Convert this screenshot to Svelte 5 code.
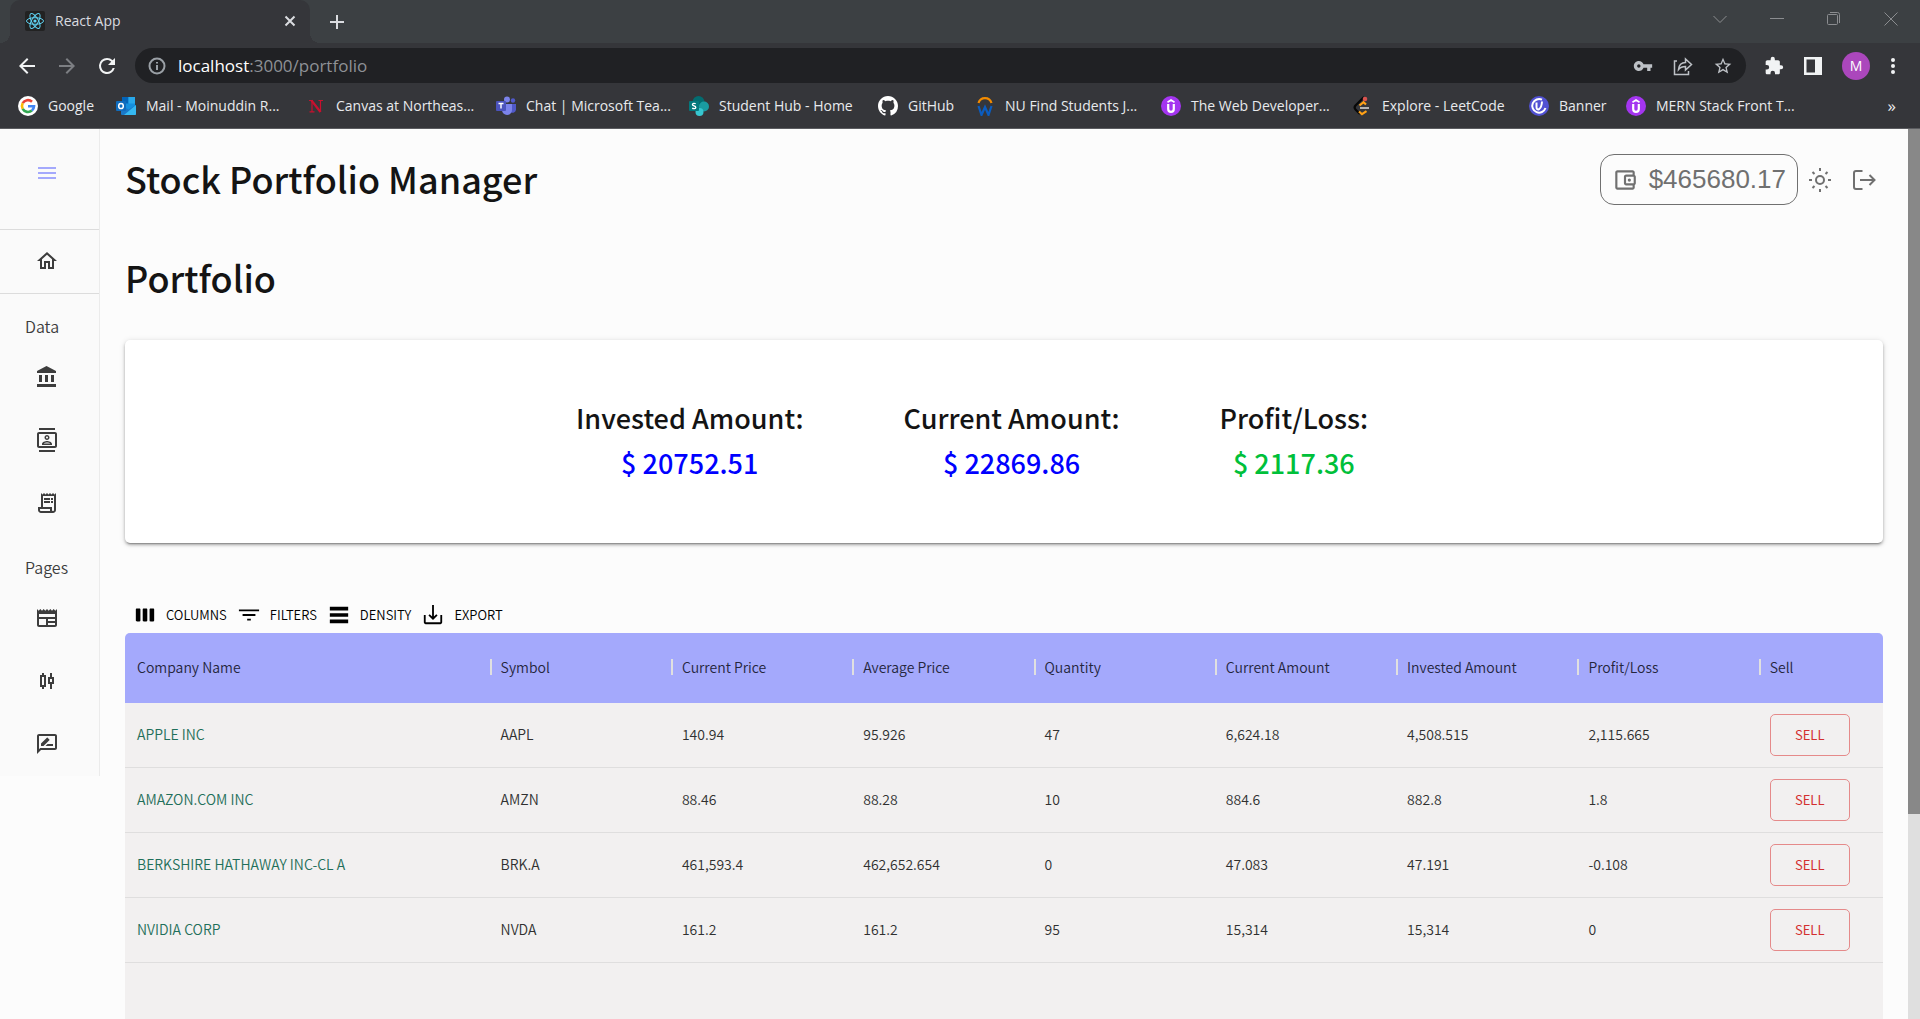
<script>
  const icons = {
    menu: 'M3 18h18v-2H3v2zm0-5h18v-2H3v2zm0-7v2h18V6H3z',
    home: 'M12 5.69l5 4.5V18h-2v-6H9v6H7v-7.81l5-4.5M12 3L2 12h3v8h6v-6h2v6h6v-8h3L12 3z',
    bank: 'M4 10v7h3v-7H4zm6 0v7h3v-7h-3zM2 22h19v-3H2v3zm14-12v7h3v-7h-3zm-4.5-9L2 6v2h19V6l-9.5-5z',
    contacts: 'M20 4H4c-1.1 0-2 .9-2 2v12c0 1.1.9 2 2 2h16c1.1 0 2-.9 2-2V6c0-1.1-.9-2-2-2zm0 14H4V6h16v12zM4 0h16v2H4zm0 22h16v2H4zm8-10c1.38 0 2.5-1.12 2.5-2.5S13.38 7 12 7 9.5 8.12 9.5 9.5 10.62 12 12 12zm0-3.5c.55 0 1 .45 1 1s-.45 1-1 1-1-.45-1-1 .45-1 1-1zm5 7.49C17 13.9 13.69 13 12 13s-5 .9-5 2.99V17h10v-1.01zm-8.19-.49c.61-.52 2.03-1 3.19-1 1.17 0 2.59.48 3.2 1H8.81z',
    receipt: 'M19.5 3.5L18 2l-1.5 1.5L15 2l-1.5 1.5L12 2l-1.5 1.5L9 2 7.5 3.5 6 2v14H3v3c0 1.66 1.34 3 3 3h12c1.66 0 3-1.34 3-3V2l-1.5 1.5zM15 20H6c-.55 0-1-.45-1-1v-1h10v2zm4-1c0 .55-.45 1-1 1s-1-.45-1-1v-3H8V5h11v14zM9 7h6v2H9zM16 7h2v2h-2zM9 10h6v2H9zM16 10h2v2h-2z',
    news: 'M22 3l-1.67 1.67L18.67 3 17 4.67 15.33 3l-1.66 1.67L12 3l-1.67 1.67L8.67 3 7 4.67 5.33 3 3.67 4.67 2 3v16c0 1.1.9 2 2 2h16c1.1 0 2-.9 2-2V3zM11 19H4v-6h7v6zm9 0h-7v-2h7v2zm0-4h-7v-2h7v2zm0-4H4V8h16v3z',
    candles: 'M9 4H7v2H5v12h2v2h2v-2h2V6H9V4zm0 12H7V8h2v8zM19 8h-2V4h-2v4h-2v7h2v5h2v-5h2V8zm-2 5h-2v-3h2v3z',
    review: 'M20 2H4c-1.1 0-2 .9-2 2v18l4-4h14c1.1 0 2-.9 2-2V4c0-1.1-.9-2-2-2zm0 14H5.17L4 17.17V4h16v12zM10.5 14H18v-2h-5.5zM14.36 8.13c.2-.2.2-.51 0-.71l-1.77-1.77c-.2-.2-.51-.2-.71 0L6 11.53V14h2.47l5.89-5.87z',
    wallet: 'M21 7.28V5c0-1.1-.9-2-2-2H5c-1.11 0-2 .9-2 2v14c0 1.1.89 2 2 2h14c1.1 0 2-.9 2-2v-2.28c.59-.35 1-.98 1-1.72V9c0-.74-.41-1.37-1-1.72zM20 9v6h-7V9h7zM5 19V5h14v2h-6c-1.1 0-2 .9-2 2v6c0 1.1.9 2 2 2h6v2H5zM16 10.5a1.5 1.5 0 1 0 0 3a1.5 1.5 0 1 0 0-3z',
    columns: 'M6 5H3c-.55 0-1 .45-1 1v12c0 .55.45 1 1 1h3c.55 0 1-.45 1-1V6c0-.55-.45-1-1-1zM13.5 5h-3c-.55 0-1 .45-1 1v12c0 .55.45 1 1 1h3c.55 0 1-.45 1-1V6c0-.55-.45-1-1-1zM21 5h-3c-.55 0-1 .45-1 1v12c0 .55.45 1 1 1h3c.55 0 1-.45 1-1V6c0-.55-.45-1-1-1z',
    filters: 'M10 18h4v-2h-4v2zM1 6v2h22V6H1zm4 7h14v-2H5v2z',
    density: 'M22 7H2V3h20v4zM22 10H2v4h20v-4zM22 17H2v4h20v-4z',
    exportIcon: 'M20 12v8H4v-8H2v8c0 1.1.9 2 2 2h16c1.1 0 2-.9 2-2v-8h-2zm-7 1.67l2.590-2.580L17 12.500l-5 5-5-5 1.410-1.410L11 13.670V1h2z',
    key: 'M12.65 10C11.83 7.67 9.61 6 7 6c-3.31 0-6 2.69-6 6s2.69 6 6 6c2.61 0 4.83-1.67 5.65-4H17v4h4v-4h2v-4H12.65zM7 14c-1.1 0-2-.9-2-2s.9-2 2-2 2 .9 2 2-.9 2-2 2z',
    star: 'M22 9.24l-7.19-.62L12 2 9.19 8.63 2 9.24l5.46 4.73L5.82 21 12 17.27 18.18 21l-1.63-7.03L22 9.24zM12 15.4l-3.76 2.27 1-4.28-3.32-2.88 4.38-.38L12 6.1l1.71 4.04 4.38.38-3.32 2.88 1 4.28L12 15.4z',
    puzzle: 'M20.5 11H19V7c0-1.1-.9-2-2-2h-4V3.500a2.500 2.500 0 0 0-5 0V5H4c-1.100 0-2 .9-2 2v3.800h1.500a2.700 2.700 0 0 1 0 5.400H2V20c0 1.100.9 2 2 2h3.800v-1.500a2.700 2.700 0 0 1 5.400 0V22H17c1.100 0 2-.9 2-2v-4h1.500a2.500 2.500 0 0 0 0-5z',
    back: 'M20 11H7.830l5.590-5.590L12 4l-8 8 8 8 1.410-1.410L7.830 13H20v-2z',
    forward: 'M12 4l-1.410 1.410L16.170 11H4v2h12.170l-5.580 5.590L12 20l8-8z',
    reload: 'M17.650 6.350A7.958 7.958 0 0 0 12 4a8 8 0 1 0 7.730 10h-2.080A6 6 0 1 1 12 6c1.660 0 3.140.69 4.220 1.780L13 11h7V4l-2.350 2.350z'
  };

  const bookmarks = [
    { icon: 'google', label: 'Google' },
    { icon: 'outlook', label: 'Mail - Moinuddin R...' },
    { icon: 'canvas', label: 'Canvas at Northeas...' },
    { icon: 'teams', label: 'Chat | Microsoft Tea...' },
    { icon: 'sharepoint', label: 'Student Hub - Home' },
    { icon: 'github', label: 'GitHub' },
    { icon: 'workday', label: 'NU Find Students J...' },
    { icon: 'udemy', label: 'The Web Developer...' },
    { icon: 'leetcode', label: 'Explore - LeetCode' },
    { icon: 'banner', label: 'Banner' },
    { icon: 'udemy', label: 'MERN Stack Front T...' }
  ];

  const dataLinks = [
    { icon: 'bank', label: 'Accounts' },
    { icon: 'contacts', label: 'Contacts' },
    { icon: 'receipt', label: 'Orders' }
  ];
  const pageLinks = [
    { icon: 'news', label: 'News' },
    { icon: 'candles', label: 'Stocks' },
    { icon: 'review', label: 'Reviews' }
  ];

  const totals = [
    { label: 'Invested Amount:', value: '$ 20752.51', gain: false },
    { label: 'Current Amount:', value: '$ 22869.86', gain: false },
    { label: 'Profit/Loss:', value: '$ 2117.36', gain: true }
  ];

  const tools = [
    { icon: 'columns', label: 'COLUMNS' },
    { icon: 'filters', label: 'FILTERS' },
    { icon: 'density', label: 'DENSITY' },
    { icon: 'exportIcon', label: 'EXPORT' }
  ];

  const headings = ['Company Name', 'Symbol', 'Current Price', 'Average Price', 'Quantity', 'Current Amount', 'Invested Amount', 'Profit/Loss', 'Sell'];
  const rows = [
    ['APPLE INC', 'AAPL', '140.94', '95.926', '47', '6,624.18', '4,508.515', '2,115.665'],
    ['AMAZON.COM INC', 'AMZN', '88.46', '88.28', '10', '884.6', '882.8', '1.8'],
    ['BERKSHIRE HATHAWAY INC-CL A', 'BRK.A', '461,593.4', '462,652.654', '0', '47.083', '47.191', '-0.108'],
    ['NVIDIA CORP', 'NVDA', '161.2', '161.2', '95', '15,314', '15,314', '0']
  ];
</script>

{#snippet icon(name, cls)}
  <svg class="icon {cls}" viewBox="0 0 24 24" aria-hidden="true"><path fill-rule="evenodd" d={icons[name]} /></svg>
{/snippet}

{#snippet favicon(name)}
  <svg class="favicon" viewBox="0 0 20 20" aria-hidden="true">
    {#if name === 'google'}
      <circle cx="10" cy="10" r="10" fill="#fff" />
      <g fill="none" stroke-width="2.600">
        <path d="M14 5.700A6 6 0 0 0 4.700 7.200" stroke="#ea4335" />
        <path d="M4.700 7.200a6 6 0 0 0 0 5.600" stroke="#fbbc05" />
        <path d="M4.700 12.800a6 6 0 0 0 9.200 1.700" stroke="#34a853" />
        <path d="M13.900 14.500A6 6 0 0 0 16 10.300H10" stroke="#4285f4" />
      </g>
    {:else if name === 'outlook'}
      <rect x="6" y="1" width="13" height="13" rx="1" fill="#1490df" />
      <path d="M6 1h6.500v6.500H6z" fill="#0364b8" />
      <path d="M12.500 1H19v6.500h-6.500z" fill="#28a8ea" />
      <path d="M5 9l7.500 4.500L20 9v9a1 1 0 0 1-1 1H6a1 1 0 0 1-1-1z" fill="#1a78c8" />
      <path d="M20 9v9a1 1 0 0 1-1 1H8z" fill="#35b8f1" />
      <rect x="0" y="5" width="10" height="10" rx="1" fill="#0f6cbd" />
      <ellipse cx="5" cy="10" rx="2.300" ry="2.600" fill="none" stroke="#fff" stroke-width="1.500" />
    {:else if name === 'canvas'}
      <g fill="none" stroke="#c8102e"><path d="M6 16V4.500M14.500 4v12" stroke-width="1.200" /><path d="M5.500 4.500l9 11.500" stroke-width="2.200" /><path d="M3 4.500h4M12.500 4.500h4.500M3.500 15.800h5" stroke-width="1.200" /></g>
    {:else if name === 'teams'}
      <circle cx="11" cy="3.500" r="3" fill="#7b83eb" />
      <circle cx="17" cy="4.500" r="2.200" fill="#5059c9" />
      <path d="M14 8h6v5.500a3.500 3.500 0 0 1-5 3z" fill="#5059c9" />
      <path d="M6 8h10v6a5 5 0 0 1-10 0z" fill="#7b83eb" />
      <rect x="0" y="5" width="10" height="10" rx="1" fill="#4b53bc" />
      <path d="M2.500 7.500h5M5 7.500v5" stroke="#fff" stroke-width="1.400" />
    {:else if name === 'sharepoint'}
      <circle cx="9.500" cy="6" r="6" fill="#036c70" />
      <circle cx="15" cy="10.500" r="5" fill="#1a9ba1" />
      <circle cx="10.500" cy="16" r="4" fill="#37c6d0" />
      <rect x="0" y="5" width="10" height="10" rx="1" fill="#03787c" />
      <path d="M6.700 7.800C5.500 7 3.400 7.200 3.400 8.600c0 1.700 3.400 1 3.400 2.800 0 1.400-2.200 1.600-3.600.7" fill="none" stroke="#fff" stroke-width="1.300" />
    {:else if name === 'github'}
      <path transform="scale(1.25)" fill="#fff" d="M8 0C3.580 0 0 3.580 0 8c0 3.540 2.290 6.530 5.470 7.590.4.070.55-.17.55-.38 0-.19-.01-.82-.01-1.490-2.010.37-2.530-.49-2.690-.94-.09-.23-.48-.94-.82-1.130-.28-.15-.68-.52-.01-.53.63-.01 1.080.58 1.230.82.72 1.210 1.870.87 2.330.66.070-.52.28-.87.51-1.070-1.780-.2-3.640-.89-3.640-3.950 0-.87.31-1.590.82-2.150-.08-.2-.36-1.020.080-2.120 0 0 .67-.21 2.200.82.64-.18 1.320-.27 2-.27s1.360.09 2 .27c1.530-1.040 2.200-.82 2.200-.82.44 1.100.16 1.920.080 2.120.51.56.82 1.270.82 2.150 0 3.070-1.870 3.750-3.650 3.950.29.25.54.73.54 1.480 0 1.070-.01 1.930-.01 2.200 0 .21.15.46.55.38A8.010 8.010 0 0 0 16 8c0-4.420-3.580-8-8-8z" />
    {:else if name === 'workday'}
      <path d="M3.500 7a6.800 6.800 0 0 1 13 0" fill="none" stroke="#f38b00" stroke-width="2.200" />
      <path d="M3.500 10l3 9 3.500-8 3.500 8 3-9" fill="none" stroke="#0b5cbf" stroke-width="2.200" />
    {:else if name === 'udemy'}
      <circle cx="10" cy="10" r="10" fill="#a435f0" />
      <path d="M6.500 6.200L10 4l3.500 2.200" fill="none" stroke="#fff" stroke-width="1.600" />
      <path d="M7.200 8v5a2.800 2.800 0 0 0 5.600 0V8" fill="none" stroke="#fff" stroke-width="2.200" />
    {:else if name === 'leetcode'}
      <path d="M12 1L3.500 9.500a3 3 0 0 0 0 4L8 18" fill="none" stroke="#070707" stroke-width="2.200" />
      <circle cx="13" cy="3" r="2.300" fill="#d9534f" />
      <path d="M14 8.500L11.500 6.200 7.500 9.500M7 15.500l3 2.700 4.500-3" fill="none" stroke="#ffa116" stroke-width="2.200" />
      <path d="M8 12h9" stroke="#b3b3b3" stroke-width="2" />
    {:else if name === 'banner'}
      <circle cx="10" cy="10" r="10" fill="#5151d3" />
      <path d="M13 3.700A6.800 6.800 0 1 0 16.500 12M7.500 6.500v4.500c0 4.500 5 3 5.500-5.500" fill="none" stroke="#fff" stroke-width="2" />
    {/if}
  </svg>
{/snippet}

<div class="window">
  <header class="chrome">
    <div class="tabs">
      <div class="tab">
        <svg class="tab-icon" viewBox="0 0 20 20" aria-hidden="true">
          <rect width="20" height="20" rx="2" fill="#222" />
          <g fill="none" stroke="#5fd3f3">
            <ellipse cx="10" cy="10" rx="8.500" ry="3.300" />
            <ellipse cx="10" cy="10" rx="8.500" ry="3.300" transform="rotate(60 10 10)" />
            <ellipse cx="10" cy="10" rx="8.500" ry="3.300" transform="rotate(120 10 10)" />
          </g>
          <circle cx="10" cy="10" r="1.600" fill="#5fd3f3" />
        </svg>
        <span class="tab-title">React App</span>
        <button class="plain" aria-label="Close tab"><svg class="small" viewBox="0 0 12 12"><path d="M1.500 1.500l9 9M10.500 1.500l-9 9" /></svg></button>
      </div>
      <button class="plain new-tab" aria-label="New tab"><svg class="plus" viewBox="0 0 16 16"><path d="M8 1v14M1 8h14" /></svg></button>
      <div class="controls">
        <button class="plain" aria-label="Search tabs"><svg viewBox="0 0 14 14"><path d="M.5 4L7 10.500 13.500 4" /></svg></button>
        <button class="plain" aria-label="Minimize"><svg viewBox="0 0 14 14"><path d="M0 6.500h14" /></svg></button>
        <button class="plain" aria-label="Restore"><svg viewBox="0 0 14 14"><path d="M1.500 2.500h8a1 1 0 0 1 1 1v8a1 1 0 0 1-1 1h-8a1 1 0 0 1-1-1v-8a1 1 0 0 1 1-1zM3 .5h7.500a2 2 0 0 1 2 2V11" /></svg></button>
        <button class="plain" aria-label="Close"><svg viewBox="0 0 14 14"><path d="M.5.5l13 13M13.500.5l-13 13" /></svg></button>
      </div>
    </div>

    <div class="toolbar">
      <button class="plain light" aria-label="Back">{@render icon('back', '')}</button>
      <button class="plain dim" aria-label="Forward">{@render icon('forward', '')}</button>
      <button class="plain light" aria-label="Reload">{@render icon('reload', '')}</button>
      <div class="address">
        <svg class="info" viewBox="0 0 18 18" aria-hidden="true"><circle cx="9" cy="9" r="7.500" /><path d="M9 8v5M9 5v1.500" /></svg>
        <div class="url"><b>localhost</b>:3000/portfolio</div>
        <button class="plain" aria-label="Passwords">{@render icon('key', 'mid')}</button>
        <button class="plain" aria-label="Share">
          <svg class="share" viewBox="0 0 20 20"><path d="M4 5H1.500v13.500h14V15M5.500 13.500c.5-5 3.500-7 7-7V3l6 5.500-6 5.500v-3.500c-3 0-5 .5-7 3z" /></svg>
        </button>
        <button class="plain" aria-label="Bookmark">{@render icon('star', 'mid')}</button>
      </div>
      <div class="side">
        <button class="plain" aria-label="Extensions">{@render icon('puzzle', 'mid')}</button>
        <button class="plain" aria-label="Side panel"><svg class="panel" viewBox="0 0 18 18"><path fill-rule="evenodd" d="M0 0h18v18H0zM2.500 2.500v13H11v-13z" /></svg></button>
        <button class="avatar" aria-label="Profile">M</button>
        <button class="plain" aria-label="Menu"><svg class="dots" viewBox="0 0 6 18"><circle cx="3" cy="3" r="2" /><circle cx="3" cy="9" r="2" /><circle cx="3" cy="15" r="2" /></svg></button>
      </div>
    </div>

    <nav class="bookmarks">
      {#each bookmarks as mark}
        <a href="#bookmark">{@render favicon(mark.icon)}<span>{mark.label}</span></a>
      {/each}
      <button class="plain more" aria-label="More bookmarks">»</button>
    </nav>
  </header>

  <div class="page">
    <aside class="sidebar">
      <button class="plain toggle" aria-label="Toggle menu">{@render icon('menu', '')}</button>
      <a class="home" href="#home" aria-label="Home">{@render icon('home', '')}</a>
      <h6>Data</h6>
      {#each dataLinks as link}
        <a class="item" href="#{link.icon}" aria-label={link.label}>{@render icon(link.icon, '')}</a>
      {/each}
      <h6>Pages</h6>
      {#each pageLinks as link}
        <a class="item" href="#{link.icon}" aria-label={link.label}>{@render icon(link.icon, '')}</a>
      {/each}
    </aside>

    <main>
      <div class="topbar">
        <h1>Stock Portfolio Manager</h1>
        <div class="actions">
          <button class="balance">{@render icon('wallet', 'large')}$465680.17</button>
          <button class="plain" aria-label="Light mode">
            <svg class="icon line" viewBox="0 0 24 24"><circle cx="12" cy="12" r="4" /><path d="M12 0v3M12 21v3M1 12h3M20 12h3M4.500 4l2 2M17.500 18l2 2M19.500 4l-2 2M6.500 18l-2 2" /></svg>
          </button>
          <button class="plain" aria-label="Log out">
            <svg class="icon line" viewBox="0 0 24 24"><path d="M10.500 3H4Q2 3 2 5v14q0 2 2 2h6.500M8 12h14M17.500 7l5 5-5 5" /></svg>
          </button>
        </div>
      </div>

      <h2>Portfolio</h2>

      <section class="card">
        {#each totals as total}
          <div class="total">
            <div>{total.label}</div>
            <div class="amount" class:gain={total.gain}>{total.value}</div>
          </div>
        {/each}
      </section>

      <div class="tools">
        {#each tools as tool}
          <button class="plain tool">{@render icon(tool.icon, '')}<span>{tool.label}</span></button>
        {/each}
      </div>

      <div class="grid">
        <table>
          <thead>
            <tr>{#each headings as heading}<th scope="col"><span>{heading}</span></th>{/each}</tr>
          </thead>
          <tbody>
            {#each rows as row}
              <tr>
                {#each row as cell}<td>{cell}</td>{/each}
                <td><button class="sell">SELL</button></td>
              </tr>
            {/each}
          </tbody>
        </table>
      </div>
    </main>

    <div class="scrollbar"><div class="thumb"></div></div>
  </div>
</div>

<style>
  :global(body) {
    margin: 0;
    background: #fcfcfc;
  }
  :global(#app *) {
    box-sizing: border-box;
  }
  .window {
    display: flex;
    flex-direction: column;
    min-height: 100vh;
    font-family: 'Noto Sans CJK SC', 'Noto Sans', sans-serif;
    color: #141414;
  }
  a {
    color: inherit;
    text-decoration: none;
  }
  svg {
    display: block;
    flex: none;
  }
  .icon {
    width: 24px;
    height: 24px;
    fill: currentColor;
  }
  .plain {
    display: flex;
    align-items: center;
    justify-content: center;
    padding: 0;
    border: 0;
    background: none;
    color: inherit;
    font: inherit;
  }

  /* Browser frame */
  .chrome {
    background: #35363a;
    border-bottom: 1px solid #5b5c60;
    color: #e8eaed;
    font-family: 'Open Sans', 'Noto Sans', sans-serif;
    font-size: 14px;
    line-height: 20px;
  }
  .tabs {
    display: flex;
    height: 43px;
    padding-left: 10px;
    background: #3c4043;
  }
  .tab {
    position: relative;
    display: flex;
    align-items: center;
    width: 300px;
    padding: 0 14px 2px 15px;
    border-radius: 10px 10px 0 0;
    background: #35363a;
    color: #dadce0;
  }
  .tab::before,
  .tab::after {
    content: '';
    position: absolute;
    bottom: 0;
    width: 10px;
    height: 10px;
  }
  .tab::before {
    right: 100%;
    background: radial-gradient(circle at 0 0, #3c4043 10px, #35363a 10px);
  }
  .tab::after {
    left: 100%;
    background: radial-gradient(circle at 100% 0, #3c4043 10px, #35363a 10px);
  }
  .tab-icon {
    width: 20px;
    height: 20px;
    margin-right: 10px;
  }
  .tab-title {
    flex: 1;
  }
  .small {
    width: 12px;
    height: 12px;
  }
  .plus {
    width: 16px;
    height: 16px;
  }
  .small,
  .plus {
    fill: none;
    stroke: #dadce0;
    stroke-width: 2;
  }
  .new-tab {
    margin-left: 19px;
  }
  .controls {
    display: flex;
    margin-left: auto;
    padding-top: 12px;
    padding-right: 22px;
    gap: 43px;
    align-items: flex-start;
  }
  .controls svg {
    width: 14px;
    height: 14px;
    fill: none;
    stroke: #8b8d90;
  }
  .toolbar {
    display: flex;
    align-items: center;
    height: 45px;
    padding: 0 24px 0 15px;
  }
  .toolbar > .light,
  .toolbar > .dim {
    margin-right: 16px;
  }
  .light {
    color: #f1f3f4;
  }
  .dim {
    color: #7d7f83;
  }
  .address {
    display: flex;
    flex: 1;
    align-items: center;
    height: 35px;
    margin-right: 18px;
    padding: 0 13px;
    gap: 20px;
    border-radius: 18px;
    background: #202124;
    color: #bdc1c6;
  }
  .info {
    width: 18px;
    height: 18px;
    margin-right: -8px;
    fill: none;
    stroke: #9aa0a6;
    stroke-width: 2;
  }
  .url {
    flex: 1;
    color: #8e9196;
    font-size: 17px;
  }
  .url b {
    color: #fff;
    font-weight: 400;
  }
  .mid,
  .share {
    width: 20px;
    height: 20px;
  }
  .share {
    fill: none;
    stroke: currentColor;
    stroke-width: 1.500;
  }
  .side {
    display: flex;
    align-items: center;
    gap: 20px;
    color: #f1f3f4;
  }
  .panel {
    width: 18px;
    height: 18px;
    fill: currentColor;
  }
  .avatar {
    width: 28px;
    height: 28px;
    padding: 0;
    border: 0;
    border-radius: 50%;
    background: #ab47bc;
    color: #fff;
    font: inherit;
  }
  .dots {
    width: 6px;
    height: 18px;
    fill: currentColor;
  }
  .bookmarks {
    display: grid;
    grid-template-columns: 98px 190px 190px 193px 189px 97px 186px 191px 177px 97px 1fr auto;
    align-items: center;
    height: 40px;
    padding: 0 24px 4px 18px;
  }
  .bookmarks a {
    display: flex;
    align-items: center;
    gap: 10px;
    white-space: nowrap;
  }
  .favicon {
    width: 20px;
    height: 20px;
  }
  .more {
    font-size: 17px;
  }

  /* Application */
  .page {
    display: flex;
    flex: 1;
  }
  .sidebar {
    align-self: flex-start;
    width: 100px;
    padding-top: 13px;
    border-right: 1px solid #ebebeb;
    background: #fafafa;
    color: #3d3d3d;
  }
  .toggle {
    width: 94px;
    height: 62px;
    margin-bottom: 25px;
    color: #a4a9fc;
  }
  .home {
    display: flex;
    align-items: center;
    height: 65px;
    padding: 0 0 2px 35px;
    border: solid #dcdcdc;
    border-width: 1px 0;
  }
  h6 {
    margin: 0;
    padding: 22px 0 10px 25px;
    font-size: 16px;
    font-weight: 350;
    line-height: 20px;
  }
  .item {
    display: flex;
    align-items: center;
    height: 63px;
    padding: 0 0 1px 35px;
  }
  main {
    display: flex;
    flex: 1;
    flex-direction: column;
    min-width: 0;
    padding: 25px 25px 0;
  }
  .topbar {
    display: flex;
    align-items: center;
    justify-content: space-between;
    height: 51px;
  }
  h1,
  h2 {
    margin: 0;
    padding-bottom: 4px;
    font-size: 36px;
    font-weight: 500;
    line-height: 46px;
  }
  h2 {
    margin: 49px 0 36px;
  }
  .actions {
    display: flex;
    align-items: center;
    gap: 20px;
    padding-right: 7px;
    color: #707070;
  }
  .balance {
    display: flex;
    align-items: center;
    height: 51px;
    margin-right: -10px;
    padding: 0 11px;
    gap: 11px;
    border: 1px solid #707070;
    border-radius: 14px;
    background: none;
    color: #707070;
    font: 26px 'Liberation Sans', Arial, sans-serif;
  }
  .large {
    width: 26px;
    height: 26px;
  }
  .line {
    fill: none;
    stroke: currentColor;
    stroke-width: 2;
  }
  .card {
    display: flex;
    justify-content: center;
    padding: 55px 64px 58px 0;
    gap: 100px;
    border-radius: 5px;
    background: #fff;
    box-shadow: 0 3px 1px -2px #0003, 0 2px 3px #0004, 0 1px 6px #0002;
    font-size: 27px;
    font-weight: 500;
    line-height: 45px;
    text-align: center;
  }
  .amount {
    color: #00f;
  }
  .gain {
    color: #00c03a;
  }
  .tools {
    display: flex;
    gap: 11px;
    margin-top: 54px;
    padding: 6px 9px;
  }
  .tool {
    gap: 10px;
    color: #000;
    font-size: 13px;
    font-weight: 350;
    line-height: 24px;
  }
  .tool .icon {
    width: 22px;
    height: 22px;
  }
  .grid {
    flex: 1;
    border-radius: 5px 5px 0 0;
    background: #f2f0f0;
    overflow: hidden;
  }
  table {
    width: 100%;
    border-collapse: separate;
    border-spacing: 0;
    table-layout: fixed;
    color: #303030;
    font-size: 14px;
    font-weight: 350;
    line-height: 20px;
  }
  th {
    width: 181px;
    height: 70px;
    padding: 0 0 2px;
    background: #a4a9fc;
    color: #24263c;
    font-weight: 350;
    text-align: left;
  }
  th:first-child {
    width: 363px;
  }
  th:last-child {
    width: 125px;
  }
  th span {
    display: flex;
    align-items: center;
    gap: 9px;
    padding-left: 1px;
  }
  th span::before {
    content: '';
    width: 2px;
    height: 16px;
    background: #e0e0e0;
  }
  th:first-child span::before {
    background: none;
  }
  td {
    height: 65px;
    padding: 0 0 2px 12px;
    border-bottom: 1px solid #dfdede;
  }
  td:last-child {
    padding-bottom: 0;
  }
  td:first-child {
    color: #1f6f5a;
  }
  .sell {
    display: block;
    width: 80px;
    height: 42px;
    padding: 0;
    border: 1px solid #e58a8a;
    border-radius: 5px;
    background: none;
    color: #d32f2f;
    font: inherit;
    font-weight: 400;
    font-size: 13px;
  }
  .scrollbar {
    width: 12px;
    background: #dfdfdf;
  }
  .thumb {
    height: 77%;
    background: #888;
  }
</style>
